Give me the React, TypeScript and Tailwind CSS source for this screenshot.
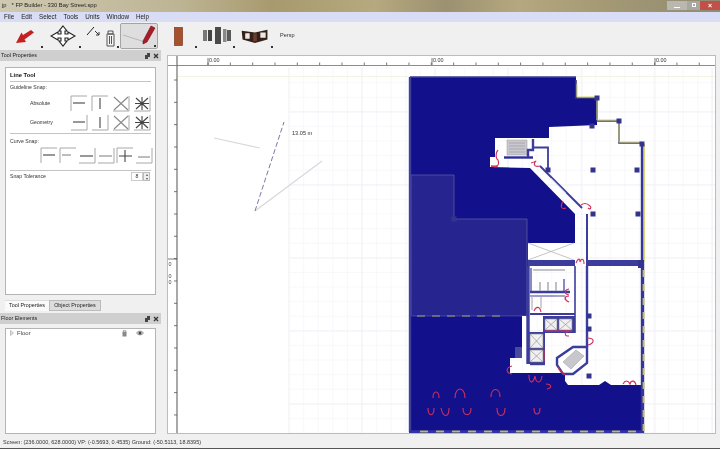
import React from "react";

const range = (start: number, end: number, step: number) => {
  const out: number[] = [];
  for (let v = start; v <= end; v += step) out.push(v);
  return out;
};

function SnapIcon({ corner, d, small }: { corner: "tl" | "br"; d: string; small?: boolean }) {
  return (
    <svg width="18" height="17" viewBox="0 0 18 17" className="block shrink-0" fill="none">
      <path d={corner === "tl" ? "M1 16V1H17" : "M1 16H17V1"} stroke="#a8a8a8" strokeWidth="1" />
      <path d={d} stroke={small ? "#888" : "#444"} strokeWidth="1.1" />
    </svg>
  );
}

const H = "M3 8H15";
const V = "M9 3V14";
const X = "M2 2L16 15M16 2L2 15";
const STAR = "M3 3L15 14M15 3L3 14M9 2V15M2 8.5H16";

function ToolButton({ active, children }: { active?: boolean; children: React.ReactNode }) {
  return (
    <div
      className={
        "relative w-[38px] h-[26px] shrink-0 flex items-center justify-center " +
        (active ? "border border-[#a4a4a4] bg-[#dedede] rounded-[2px]" : "")
      }
    >
      {children}
      <span className="absolute right-[1px] bottom-[1px] w-[2px] h-[2px] bg-[#333]" />
    </div>
  );
}

function PanelHeader({ title }: { title: string }) {
  return (
    <div className="h-[11px] bg-[#cfcfcf] flex items-center justify-between pl-[1px] pr-[2px] shrink-0">
      <span className="text-[5.4px] text-[#222] leading-none">{title}</span>
      <span className="flex items-center gap-[3px]">
        <svg width="5" height="6" viewBox="0 0 5 6">
          <path d="M0 2H3V6H0ZM2 0H5V4H3V2H2Z" fill="#444" />
        </svg>
        <svg width="6" height="6" viewBox="0 0 6 6">
          <path d="M1 1L5 5M5 1L1 5" stroke="#333" strokeWidth="1.3" />
        </svg>
      </span>
    </div>
  );
}

function FloorPlan() {
  const ticksX = range(208, 716, 22.33);
  const ticksY = range(80, 434, 22.33);
  const minorX = range(289, 716, 14.6);
  const minorY = range(68, 434, 14.6);
  const majorX = [289, 362, 435, 508, 582, 655, 712];
  const majorY = [112, 185, 258, 331, 404];
  const columns = [
    [593, 170], [637, 170], [593, 214], [638, 214], [589, 316], [589, 329], [589, 376],
    [597, 98], [619, 121], [642, 144], [548, 170], [592, 126], [454, 219],
  ];
  const reds = [
    "M433 398C433 390 439 390 439 398",
    "M455 398C455 386 465 386 465 398",
    "M491 397C491 387 500 387 500 397",
    "M428 408C428 417 434 417 434 408",
    "M441 408C443 418 449 418 449 408",
    "M463 408C463 417 471 417 471 408",
    "M497 408C497 418 505 418 505 408",
    "M534 408C534 416 540 416 540 408",
    "M529 375C529 384 533 384 535 376C536 384 541 384 542 376",
    "M546 384C552 384 552 388 547 389",
    "M512 366C505 368 506 373 512 374",
    "M491 166C496 168 500 166 498 160C495 158 496 152 498 150",
    "M491 166H498",
    "M531 163C535 162 537 160 535 162C533 166 536 167 540 166",
    "M563 201C560 206 561 210 566 208",
    "M581 205C585 202 588 204 590 206C592 208 590 210 588 208",
    "M576 263C578 258 580 258 580 262C581 258 584 258 584 264",
    "M623 384C625 380 628 380 630 384C631 380 635 380 636 385",
    "M569 336C564 336 564 332 569 331",
    "M569 302C564 300 564 296 569 296",
    "M569 295C564 294 564 290 569 289",
    "M587 338C595 338 595 343 588 345",
    "M534 311C536 306 540 306 541 312",
    "M545 331H572",
    "M544 350V361",
    "M558 367C560 372 564 373 565 375",
  ];
  const oliveBottom = range(420, 640, 16);
  const oliveRight = range(270, 425, 14);
  const oliveMid = range(417, 505, 15);
  return (
    <svg viewBox="168 56 547 377" className="block w-full h-full" fill="none">
      <rect x="168" y="56" width="547" height="377" fill="#ffffff" />
      {minorX.map((x) => (
        <path key={"mx" + x} d={`M${x} 68V433`} stroke="#f7f7fa" strokeWidth="0.7" />
      ))}
      {minorY.map((y) => (
        <path key={"my" + y} d={`M289 ${y}H715`} stroke="#f7f7fa" strokeWidth="0.7" />
      ))}
      {majorX.map((x) => (
        <path key={"jx" + x} d={`M${x} 68V433`} stroke="#f0f0f5" strokeWidth="0.8" />
      ))}
      {majorY.map((y) => (
        <path key={"jy" + y} d={`M289 ${y}H715`} stroke="#f0f0f5" strokeWidth="0.8" />
      ))}
      <path d="M177 76.5H715" stroke="#f4f2e0" strokeWidth="1" />

      {/* sketched lines */}
      <path d="M214 138L260 148" stroke="#d8d8dc" strokeWidth="1.2" />
      <path d="M255 211L322 161" stroke="#d8d8dc" strokeWidth="1.2" />
      <path d="M255 211L284 122" stroke="#7a78a8" strokeWidth="1" strokeDasharray="5 2.5" />
      <text x="292" y="135" fontSize="5.6" fill="#333">13.05 m</text>

      {/* solid floor areas */}
      <path
        d="M410 77H576V98H597V125L549 127V138H495V157H490V167L530 168L575 214V243H528V316H410Z"
        fill="#13108b"
      />
      <path d="M411 175H454V219H527V316H411Z" fill="#26248f" stroke="#5a5aa0" strokeWidth="0.8" />
      <path
        d="M409 316H522V358H510V373H565V381L568 385H599L605 381L611 385H642V432H409Z"
        fill="#13108b"
      />
      <path d="M528 243H575V260H528Z" fill="#ffffff" />
      <path d="M528 243L574 260M574 243L528 260" stroke="#aaa" strokeWidth="0.7" />
      <path d="M515 347H523V358H515Z" fill="#4a4a9c" />

      {/* outer walls */}
      <path d="M410 77H576" stroke="#3f3e9c" strokeWidth="1.5" />
      <path d="M410 77V432" stroke="#4040a0" strokeWidth="2.4" />
      <path d="M576 80V98H597V121H619V143H642" stroke="#3c3c80" strokeWidth="1.6" />
      <path d="M577 84V97H597V120H619V142H642" stroke="#d4d460" strokeWidth="1" />
      <path d="M642.5 144V432H409" stroke="#3434a0" strokeWidth="3.4" />
      <path d="M644 144V262" stroke="#d8d860" strokeWidth="1.6" />
      {oliveRight.map((y) => (
        <path key={"or" + y} d={`M643.5 ${y}V${y + 7}`} stroke="#c0c050" strokeWidth="1.8" />
      ))}
      {oliveBottom.map((x) => (
        <path key={"ob" + x} d={`M${x} 431.5H${x + 8}`} stroke="#c0c050" strokeWidth="1.8" />
      ))}
      {oliveMid.map((x) => (
        <path key={"om" + x} d={`M${x} 316H${x + 8}`} stroke="#c0c050" strokeWidth="1.5" />
      ))}
      <path d="M409 316H522" stroke="#3a3a9e" strokeWidth="1" />

      {/* top core */}
      <path d="M507 140H527V155H507Z" fill="#c8c8d0" stroke="#9a9a9a" strokeWidth="0.5" />
      <path d="M509 143H525M509 146H525M509 149H525M509 152H525" stroke="#8a8a8a" strokeWidth="0.5" />
      <path d="M504 157.5H533" stroke="#2d2d9a" strokeWidth="2.4" />
      <path d="M533 139V150H528V157" stroke="#3c3c9c" strokeWidth="2.4" />
      <path d="M533 147.5H548V170" stroke="#3c3c9c" strokeWidth="1.8" />
      <path d="M540 166L582 208" stroke="#3c3c9c" strokeWidth="2" />
      <path d="M551 178L566 193" stroke="#c4c468" strokeWidth="0.9" />
      <path d="M587 214V260" stroke="#3c3c9c" strokeWidth="2" />

      {/* central band */}
      <path d="M528 260H575V266H528Z" fill="#3c3c9c" />
      <path d="M586 260H643V266H586Z" fill="#3c3c9c" />
      <path d="M528 266V364" stroke="#3c3c9c" strokeWidth="3.4" />
      <path d="M522 316H526V360H522Z" fill="#ffffff" />
      <path d="M587 266V347" stroke="#3c3c9c" strokeWidth="2.4" />
      <path d="M575 266V333" stroke="#3c3c9c" strokeWidth="1.6" />

      {/* washrooms */}
      <path d="M530 292H570" stroke="#3c3c9c" strokeWidth="2.4" />
      <path d="M530 296H565" stroke="#3c3c9c" strokeWidth="1.2" />
      <path d="M531 268V292M564 279V292" stroke="#3c3c9c" strokeWidth="1.2" />
      <path d="M533 270H565M540 282V291M548 282V291M556 282V291" stroke="#b0b0b8" strokeWidth="1.6" />
      <path d="M532 296V310M541 297V308M555 296H565V300" stroke="#b0b0b8" strokeWidth="1.2" />
      <path d="M530 314H575" stroke="#3c3c9c" strokeWidth="1.8" />

      {/* elevators */}
      <path d="M543 316H575V333H543Z" fill="#3c3c9c" />
      <path d="M545 319H557V330H545ZM559 319H572V330H559Z" fill="#f0f0f2" stroke="#888" strokeWidth="0.6" />
      <path d="M545 319L557 330M557 319L545 330M559 319L572 330M572 319L559 330" stroke="#888" strokeWidth="0.6" />
      <path d="M528 332H545V364H528Z" fill="#3c3c9c" />
      <path d="M530 334H543V348H530ZM530 350H543V362H530Z" fill="#f0f0f2" stroke="#888" strokeWidth="0.6" />
      <path d="M530 334L543 348M543 334L530 348M530 350L543 362M543 350L530 362" stroke="#888" strokeWidth="0.6" />
      <path d="M530 364H545" stroke="#3c3c9c" strokeWidth="2.4" />

      {/* octagonal stair */}
      <path
        d="M573 347H587V363L573 374H563L557 365V358Z"
        fill="#ffffff"
        stroke="#3c3c9c"
        strokeWidth="2.4"
      />
      <path d="M576 350L584 356L571 369L563 362Z" fill="#c8c8cc" stroke="#999" strokeWidth="0.5" />

      {/* columns */}
      {columns.map(([x, y]) => (
        <rect key={x + "-" + y} x={x - 2.5} y={y - 2.5} width="5" height="5" fill="#34348f" />
      ))}
      <rect x="638" y="260" width="6" height="8" fill="#34348f" />

      {/* doors and marks */}
      {reds.map((d) => (
        <path key={d} d={d} stroke="#d0305a" strokeWidth="1.1" />
      ))}

      {/* rulers */}
      <rect x="168" y="56" width="547" height="9.5" fill="#ffffff" />
      <rect x="168" y="56" width="9" height="377" fill="#ffffff" />
      <path d="M168 65.5H715" stroke="#8c8c8c" strokeWidth="1.2" />
      <path d="M177 56V433" stroke="#707070" strokeWidth="1.2" />
      {ticksX.map((x) => (
        <path key={"tx" + x} d={`M${x} 62.5V65`} stroke="#555" strokeWidth="0.8" />
      ))}
      {[208, 432, 655].map((x) => (
        <g key={"l" + x}>
          <path d={`M${x} 58V65`} stroke="#555" strokeWidth="0.8" />
          <text x={x + 1} y="62" fontSize="5.4" fill="#333">0.00</text>
        </g>
      ))}
      {ticksY.map((y) => (
        <path key={"ty" + y} d={`M174 ${y}H177`} stroke="#555" strokeWidth="0.8" />
      ))}
      <path d="M168 259H177" stroke="#555" strokeWidth="0.8" />
      <text x="168.5" y="265.5" fontSize="5.4" fill="#444">0</text>
      <text x="168.5" y="277.5" fontSize="5.4" fill="#444">0</text>
      <text x="168.5" y="283.5" fontSize="5.4" fill="#444">0</text>
    </svg>
  );
}

export default function App() {
  return (
    <div className="w-[720px] h-[449px] flex flex-col overflow-hidden bg-[#f0f0f0] font-['Liberation_Sans',sans-serif] text-[#333] blur-[0.5px]">
      {/* title bar */}
      <div className="h-[12px] shrink-0 flex items-center justify-between bg-[linear-gradient(90deg,#cfc9b2_0%,#bdb493_25%,#a89a6e_38%,#b6a97f_52%,#9c9170_62%,#b5a880_72%,#a39873_85%,#8f8a72_100%)]">
        <div className="flex items-center gap-[5px] pl-[2px] text-[5.8px] leading-none text-[#222]">
          <span>jp</span>
          <span>* FP Builder - 330 Bay Street.spp</span>
        </div>
        <div className="flex items-center h-[10px] self-start">
          <span className="w-[20px] h-[9px] bg-[#b8b8b0] flex items-end justify-center pb-[2px]">
            <span className="w-[6px] h-[1px] bg-white" />
          </span>
          <span className="w-[13px] h-[9px] bg-[#a8a8a0] flex items-center justify-center">
            <span className="w-[4px] h-[4px] border border-white" />
          </span>
          <span className="w-[20px] h-[9px] bg-[#c05048] flex items-center justify-center text-[7px] leading-none text-white font-bold">
            ×
          </span>
        </div>
      </div>
      {/* menu */}
      <div className="h-[10px] shrink-0 bg-[#d8dcf4] flex items-center gap-[7px] pl-[4px] text-[6.3px] leading-none text-[#222]">
        <span>File</span>
        <span>Edit</span>
        <span>Select</span>
        <span>Tools</span>
        <span>Units</span>
        <span>Window</span>
        <span>Help</span>
      </div>
      {/* toolbar */}
      <div className="h-[28px] shrink-0 flex items-center pl-[6px] bg-[#f0f0f0]">
        <ToolButton>
          <svg width="18" height="13" viewBox="0 0 18 13">
            <path d="M18 2.5L15 0L7 5L5.5 2.5L0 13L10 12L8.5 9.5Z" fill="#c4201f" />
          </svg>
        </ToolButton>
        <ToolButton>
          <svg width="26" height="22" viewBox="0 0 26 22" fill="#fff" stroke="#222" strokeWidth="1.1">
            <path d="M13 1L17 6H15V9H18V7L25 11L18 15V13H15V16H17L13 21L9 16H11V13H8V15L1 11L8 7V9H11V6H9Z" />
          </svg>
        </ToolButton>
        <ToolButton>
          <svg width="30" height="22" viewBox="0 0 30 22" fill="none">
            <path d="M1 10L8 2" stroke="#222" strokeWidth="1" />
            <path d="M9 6L13 10M13 7V10H10" stroke="#333" strokeWidth="1" />
            <path d="M21 9H28V21H21Z" stroke="#555" strokeWidth="1" fill="#f4f4f4" />
            <path d="M22 6H27V9H22ZM23.5 11V19M25.5 11V19" stroke="#555" strokeWidth="1" />
          </svg>
        </ToolButton>
        <ToolButton active>
          <svg width="36" height="24" viewBox="0 0 36 24" fill="none">
            <path d="M2 11L24 18" stroke="#b8b8b8" strokeWidth="1" />
            <path d="M22 17L30 2L34 4L26 18L22 20Z" fill="#a81c28" stroke="#70101a" strokeWidth="0.6" />
          </svg>
        </ToolButton>
        <div className="w-[2px] shrink-0" />
        <ToolButton>
          <svg width="10" height="19" viewBox="0 0 10 19">
            <rect x="0.5" y="0.5" width="8" height="18" fill="#a4512c" stroke="#7c3a1e" strokeWidth="0.7" />
          </svg>
        </ToolButton>
        <ToolButton>
          <svg width="30" height="18" viewBox="0 0 30 18">
            <rect x="1" y="3" width="4" height="11" fill="#777" />
            <rect x="6" y="3" width="4" height="11" fill="#444" />
            <rect x="13" y="0" width="6" height="17" fill="#4a4a4a" />
            <rect x="21" y="2" width="3.5" height="13" fill="#888" />
            <rect x="25" y="3" width="4" height="11" fill="#5a5a5a" />
          </svg>
        </ToolButton>
        <ToolButton>
          <svg width="28" height="16" viewBox="0 0 30 18">
            <path d="M0 3L15 5L29 2V13L15 17L1 13Z" fill="#33201c" />
            <path d="M4 6H9V12H4ZM21 5H27V11H21Z" fill="#efe9dd" />
            <path d="M13 6L17 6V15L13 15Z" fill="#6b3e28" />
          </svg>
        </ToolButton>
        <span className="ml-[6px] text-[5.6px] leading-none text-[#333]">Persp</span>
      </div>
      {/* main */}
      <div className="flex-1 min-h-0 flex">
        <div className="w-[161px] shrink-0 flex flex-col">
          <PanelHeader title="Tool Properties" />
          <div className="mt-[6px] ml-[5px] w-[151px] h-[228px] shrink-0 border border-[#b4b4b4] bg-white pl-[4px] pr-[4px] pt-[3px]">
            <div className="h-[11px] flex items-center text-[5.8px] font-bold leading-none text-[#111] border-b border-[#c4c4c4]">
              Line Tool
            </div>
            <div className="h-[12px] flex items-center text-[5.2px] leading-none text-[#333]">Guideline Snap:</div>
            <div className="flex items-center h-[19px] pl-[20px]">
              <span className="w-[43px] text-[5.2px] leading-none text-[#333]">Absolute</span>
              <div className="flex gap-[3px]">
                <SnapIcon corner="tl" d={H} />
                <SnapIcon corner="tl" d={V} />
                <SnapIcon corner="br" d={X} small />
                <SnapIcon corner="br" d={STAR} />
              </div>
            </div>
            <div className="flex items-center h-[19px] pl-[20px]">
              <span className="w-[43px] text-[5.2px] leading-none text-[#333]">Geometry</span>
              <div className="flex gap-[3px]">
                <SnapIcon corner="br" d={H} />
                <SnapIcon corner="br" d={V} />
                <SnapIcon corner="br" d={X} small />
                <SnapIcon corner="br" d={STAR} />
              </div>
            </div>
            <div className="mt-[1px] border-t border-[#c4c4c4] h-[14px] pt-[3px] flex items-center text-[5.2px] leading-none text-[#333]">
              Curve Snap:
            </div>
            <div className="flex gap-[1px] pl-[30px] border-b border-[#c4c4c4] pb-[6px]">
              <SnapIcon corner="tl" d="M3 8H15" />
              <SnapIcon corner="tl" d="M3 8H12" small />
              <SnapIcon corner="br" d="M2 9H15" />
              <SnapIcon corner="br" d="M2 9H15" small />
              <SnapIcon corner="tl" d="M3 9H16M9 3V15" />
              <SnapIcon corner="br" d="M3 10H15" small />
            </div>
            <div className="h-[11px] flex items-center justify-between pr-[1px] text-[5.2px] leading-none text-[#333]">
              <span>Snap Tolerance</span>
              <span className="flex items-center">
                <span className="w-[12px] h-[9px] border border-[#ccc] text-center leading-[7px]">8</span>
                <span className="w-[7px] h-[9px] border border-[#bbb] bg-[#eee] flex flex-col items-center justify-center text-[4px] leading-[4px] text-[#555]">
                  <span>▴</span>
                  <span>▾</span>
                </span>
              </span>
            </div>
          </div>
          <div className="flex mt-[5px] ml-[5px] h-[11px] shrink-0 text-[5.4px] leading-none text-[#222]">
            <div className="w-[44px] flex items-center justify-center bg-[#fafafa] border-t border-[#ddd]">Tool Properties</div>
            <div className="w-[52px] flex items-center justify-center bg-[#dcdcdc] border border-[#bbb]">Object Properties</div>
          </div>
          <div className="mt-[2px]">
            <PanelHeader title="Floor Elements" />
          </div>
          <div className="mt-[4px] ml-[5px] w-[151px] flex-1 mb-[3px] border border-[#b4b4b4] bg-white">
            <div className="h-[10px] mt-[-1px] flex items-center pl-[4px] pr-[11px] text-[6px] leading-none text-[#444]">
              <svg width="4" height="6" viewBox="0 0 4 6">
                <path d="M0.5 0.5L3.5 3L0.5 5.5Z" fill="#ddd" stroke="#aaa" strokeWidth="0.6" />
              </svg>
              <span className="ml-[3px]">Floor</span>
              <span className="ml-auto flex items-center gap-[9px]">
                <svg width="5" height="7" viewBox="0 0 5 7">
                  <rect x="0.5" y="2" width="4" height="4.5" fill="#888" />
                  <path d="M1.2 2V0.8H3.8V2" stroke="#666" strokeWidth="0.7" fill="none" />
                </svg>
                <svg width="8" height="6" viewBox="0 0 8 6">
                  <path d="M0.5 3C2 0.5 6 0.5 7.5 3C6 5.5 2 5.5 0.5 3Z" fill="#ddd" stroke="#666" strokeWidth="0.6" />
                  <circle cx="4" cy="3" r="1.5" fill="#444" />
                </svg>
              </span>
            </div>
          </div>
        </div>
        <div className="flex-1 min-w-0 pl-[6px] pr-[4px] pt-[5px] pb-[3px]">
          <div className="w-[549px] h-[379px] box-border border border-[#bcbcbc] bg-white">
            <FloorPlan />
          </div>
        </div>
      </div>
      {/* status bar */}
      <div className="h-[12px] shrink-0 flex items-center pl-[3px] text-[5.5px] leading-none text-[#333] border-b border-[#555]">
        Screen: (236.0000, 628.0000) VP: (-0.5693, 0.4535) Ground: (-50.5113, 18.8395)
      </div>
    </div>
  );
}
